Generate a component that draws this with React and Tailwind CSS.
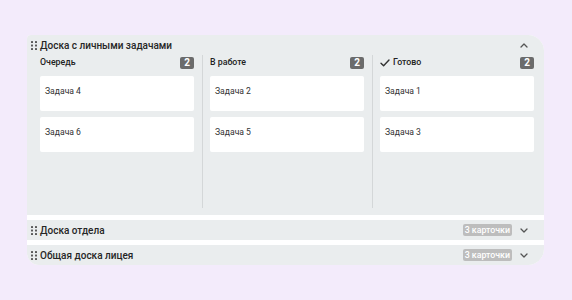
import React from "react";

function Grip() {
  return (
    <svg width="6" height="9" viewBox="0 0 6 9" className="shrink-0">
      {[0, 3.5, 7].map((y) =>
        [0, 4].map((x) => (
          <rect key={`${x}-${y}`} x={x} y={y} width="2" height="2" rx="0.5" fill="#5a5a5a" />
        ))
      )}
    </svg>
  );
}

function Chevron({ up }) {
  return (
    <svg width="8" height="5" viewBox="0 0 8 5" className="shrink-0">
      <path
        d={up ? "M1 4 L4 1 L7 4" : "M1 1 L4 4 L7 1"}
        fill="none"
        stroke="#555"
        strokeWidth="1.3"
        strokeLinecap="round"
        strokeLinejoin="round"
      />
    </svg>
  );
}

function Check() {
  return (
    <svg width="10" height="8" viewBox="0 0 10 8" className="shrink-0">
      <path d="M1 4.2 L3.6 6.8 L9 1" fill="none" stroke="#333" strokeWidth="1.4" strokeLinecap="round" strokeLinejoin="round" />
    </svg>
  );
}

function Card({ text }) {
  return (
    <div className="h-[35px] bg-white rounded-[2px] px-[5px] pt-[9px] text-[8.6px] leading-[12px] text-[#333]">
      {text}
    </div>
  );
}

function Column({ title, check, cards, width }) {
  return (
    <div className={`flex flex-col ${width}`}>
      <div className="flex items-center justify-between h-[14px] mt-[1px] mb-[6px]">
        <div className="flex items-center gap-[3px] text-[8.8px] font-medium text-[#222]">
          {check && <Check />}
          <span>{title}</span>
        </div>
        <div className="h-[12px] w-[14px] rounded-[2px] bg-[#6b6b6b] text-white text-[10px] font-bold leading-[12px] text-center">
          2
        </div>
      </div>
      <div className="flex flex-col gap-[6px]">
        {cards.map((c) => (
          <Card key={c} text={c} />
        ))}
      </div>
    </div>
  );
}

function Collapsed({ title }) {
  return (
    <div className="h-[20px] bg-[#eaedee] flex items-center pl-[4px] pr-[16px]">
      <Grip />
      <span className="ml-[3px] text-[10px] font-medium text-[#262626]">{title}</span>
      <span className="ml-auto h-[12px] px-[2px] rounded-[2px] bg-[#bdbdbd] text-white text-[8.8px] font-medium leading-[12px]">
        3 карточки
      </span>
      <span className="ml-[8px]">
        <Chevron />
      </span>
    </div>
  );
}

export default function App() {
  return (
    <div
      className="w-[572px] h-[300px] bg-[#f3ebfb] pt-[35px] pl-[27px]"
      style={{ fontFamily: "Roboto, 'Noto Sans', sans-serif" }}
    >
      <div className="w-[517px] h-[230px] bg-white rounded-tl-[4px] rounded-tr-[16px] rounded-br-[16px] rounded-bl-[12px] overflow-hidden flex flex-col gap-[5px]">
        <div className="h-[180px] bg-[#eaedee] flex flex-col">
          <div className="flex items-center h-[20px] pl-[4px] pr-[16px] pt-[1px]">
            <Grip />
            <span className="ml-[3px] text-[10px] font-medium text-[#262626]">Доска с личными задачами</span>
            <span className="ml-auto">
              <Chevron up />
            </span>
          </div>
          <div className="flex pl-[13px] pt-[0px] h-[153px]">
            <Column title="Очередь" cards={["Задача 4", "Задача 6"]} width="w-[154px]" />
            <div className="ml-[8px] mr-[7px] w-px bg-[#d4d7d8]" />
            <Column title="В работе" cards={["Задача 2", "Задача 5"]} width="w-[154px]" />
            <div className="ml-[8px] mr-[7px] w-px bg-[#d4d7d8]" />
            <Column title="Готово" check cards={["Задача 1", "Задача 3"]} width="w-[154px]" />
          </div>
        </div>
        <Collapsed title="Доска отдела" />
        <Collapsed title="Общая доска лицея" />
      </div>
    </div>
  );
}
